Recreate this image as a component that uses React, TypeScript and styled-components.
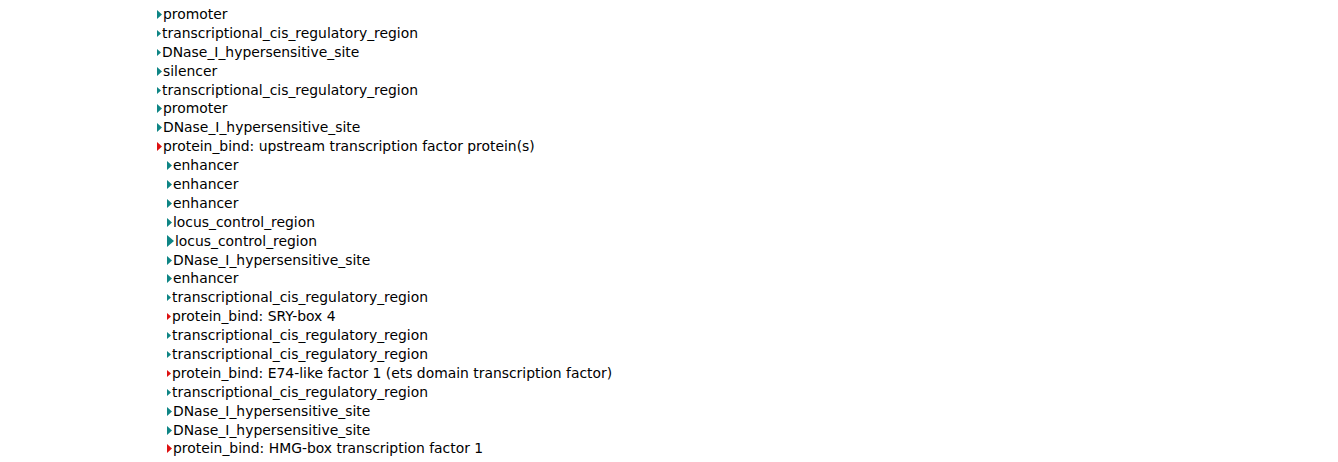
import styled, { createGlobalStyle } from "styled-components"

const GlobalStyle = createGlobalStyle`
    html, body {
        margin: 0;
        padding: 0;
        background: #FFFFFF;
    }
`

type Kind = "region" | "bind"

interface Feature {
    label: string
    kind: Kind
    depth: number
    size: number
}

const features: Feature[] = [
    { label: "promoter", kind: "region", depth: 0, size: 5 },
    { label: "transcriptional_cis_regulatory_region", kind: "region", depth: 0, size: 4 },
    { label: "DNase_I_hypersensitive_site", kind: "region", depth: 0, size: 4 },
    { label: "silencer", kind: "region", depth: 0, size: 5 },
    { label: "transcriptional_cis_regulatory_region", kind: "region", depth: 0, size: 4 },
    { label: "promoter", kind: "region", depth: 0, size: 5 },
    { label: "DNase_I_hypersensitive_site", kind: "region", depth: 0, size: 5 },
    { label: "protein_bind: upstream transcription factor protein(s)", kind: "bind", depth: 0, size: 5 },
    { label: "enhancer", kind: "region", depth: 1, size: 5 },
    { label: "enhancer", kind: "region", depth: 1, size: 5 },
    { label: "enhancer", kind: "region", depth: 1, size: 5 },
    { label: "locus_control_region", kind: "region", depth: 1, size: 5 },
    { label: "locus_control_region", kind: "region", depth: 1, size: 7 },
    { label: "DNase_I_hypersensitive_site", kind: "region", depth: 1, size: 5 },
    { label: "enhancer", kind: "region", depth: 1, size: 5 },
    { label: "transcriptional_cis_regulatory_region", kind: "region", depth: 1, size: 4 },
    { label: "protein_bind: SRY-box 4", kind: "bind", depth: 1, size: 4 },
    { label: "transcriptional_cis_regulatory_region", kind: "region", depth: 1, size: 4 },
    { label: "transcriptional_cis_regulatory_region", kind: "region", depth: 1, size: 4 },
    { label: "protein_bind: E74-like factor 1 (ets domain transcription factor)", kind: "bind", depth: 1, size: 4 },
    { label: "transcriptional_cis_regulatory_region", kind: "region", depth: 1, size: 4 },
    { label: "DNase_I_hypersensitive_site", kind: "region", depth: 1, size: 5 },
    { label: "DNase_I_hypersensitive_site", kind: "region", depth: 1, size: 5 },
    { label: "protein_bind: HMG-box transcription factor 1", kind: "bind", depth: 1, size: 5 },
]

const colors: Record<Kind, string> = {
    region: "#0E8585",
    bind: "#DD1111",
}

function Marker({ kind, size }: { kind: Kind; size: number }) {
    const h = Math.round(size * 1.7)
    return (
        <MarkerSvg width={size} height={h} viewBox={`0 0 ${size} ${h}`}>
            <polygon points={`0,0 ${size},${h / 2} 0,${h}`} fill={colors[kind]} />
        </MarkerSvg>
    )
}

function App() {
    return (
        <>
            <GlobalStyle />
            <Tree>
                {features.map((f, i) => (
                    <Row key={i} $depth={f.depth}>
                        <Marker kind={f.kind} size={f.size} />
                        <Label>{f.label}</Label>
                    </Row>
                ))}
            </Tree>
        </>
    )
}

const Tree = styled.ul`
    list-style: none;
    margin: 0;
    padding: 5px 0 0 157px;
    display: flex;
    flex-direction: column;
`

const Row = styled.li<{ $depth: number }>`
    height: 18.9px;
    display: flex;
    align-items: center;
    padding-left: ${p => p.$depth * 10}px;
`

const MarkerSvg = styled.svg`
    flex-shrink: 0;
    display: block;
    margin-right: 1px;
`

const Label = styled.span`
    font-family: "DejaVu Sans", sans-serif;
    font-size: 13.9px;
    color: #000000;
    white-space: nowrap;
    line-height: 19px;
`

export default App
